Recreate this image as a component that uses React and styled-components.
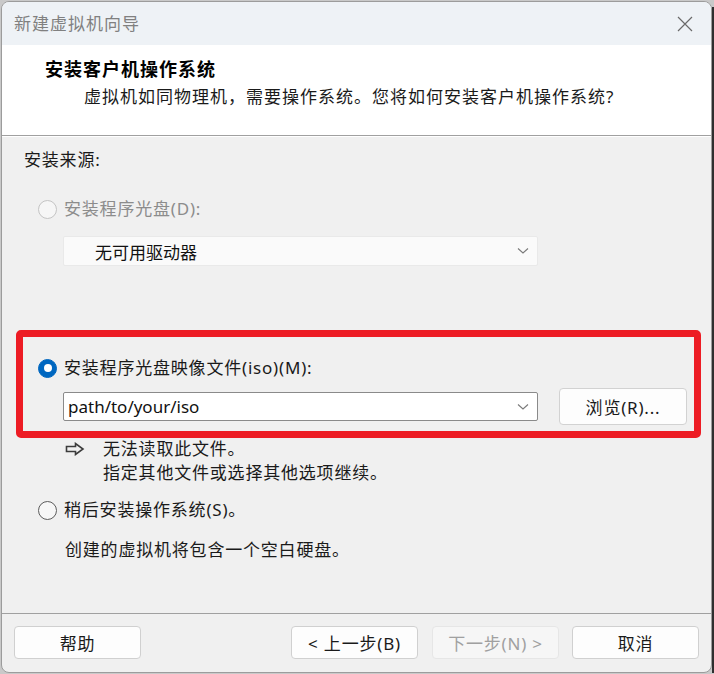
import styled, { createGlobalStyle } from "styled-components";

const GlobalStyle = createGlobalStyle`
  html, body {
    margin: 0;
    padding: 0;
    background: #c9c9c9;
  }
  * {
    box-sizing: border-box;
  }
`;

const FONT = `"Noto Sans", "Noto Sans CJK SC", sans-serif`;

const Chevron = () => (
  <svg width="12" height="8" viewBox="0 0 12 8">
    <path d="M1 1.5 L6 6 L11 1.5" fill="none" stroke="#7a7a7a" strokeWidth="1.1" />
  </svg>
);

const HollowArrow = () => (
  <svg width="20" height="14" viewBox="0 0 20 14">
    <path
      d="M1.5 4.5 H10.5 V1.5 L18 7 L10.5 12.5 V9.5 H1.5 Z"
      fill="none"
      stroke="#3c3c3c"
      strokeWidth="1.6"
      strokeLinejoin="miter"
    />
  </svg>
);

const CloseIcon = () => (
  <svg width="16" height="16" viewBox="0 0 16 16">
    <path d="M1 1 L15 15 M15 1 L1 15" stroke="#6a6a6a" strokeWidth="1.2" />
  </svg>
);

const App = () => {
  return (
    <>
      <GlobalStyle />
      <Page>
        <Window>
          <TitleBar>
            <TitleText>新建虚拟机向导</TitleText>
            <CloseButton>
              <CloseIcon />
            </CloseButton>
          </TitleBar>
          <Header>
            <HeaderTitle>安装客户机操作系统</HeaderTitle>
            <HeaderSub>虚拟机如同物理机，需要操作系统。您将如何安装客户机操作系统?</HeaderSub>
          </Header>
          <Body>
            <SectionLabel>安装来源:</SectionLabel>

            <RadioRow $top={29}>
              <Radio $disabled />
              <RadioLabel $disabled>安装程序光盘(D):</RadioLabel>
            </RadioRow>
            <FieldRow $top={17}>
              <Select $disabled>
                <SelectText $indent={31}>无可用驱动器</SelectText>
                <Chevron />
              </Select>
            </FieldRow>

            <RadioRow $top={92}>
              <Radio $checked />
              <RadioLabel>安装程序光盘映像文件(iso)(M):</RadioLabel>
            </RadioRow>
            <FieldRow $top={10}>
              <Select>
                <SelectText $indent={4}>path/to/your/iso</SelectText>
                <Chevron />
              </Select>
              <BrowseButton>浏览(R)...</BrowseButton>
            </FieldRow>
            <Warning>
              <ArrowBox>
                <HollowArrow />
              </ArrowBox>
              <WarningText>
                <span>无法读取此文件。</span>
                <span>指定其他文件或选择其他选项继续。</span>
              </WarningText>
            </Warning>

            <RadioRow $top={15}>
              <Radio />
              <RadioLabel>稍后安装操作系统(S)。</RadioLabel>
            </RadioRow>
            <Description>创建的虚拟机将包含一个空白硬盘。</Description>

            <Highlight />
          </Body>
          <Footer>
            <Button>帮助</Button>
            <Spacer />
            <Button>&lt; 上一步(B)</Button>
            <Button $disabled>下一步(N) &gt;</Button>
            <Button $gap={13}>取消</Button>
          </Footer>
        </Window>
        <Backdrop />
      </Page>
    </>
  );
};

export default App;

const Page = styled.div`
  display: flex;
  width: 714px;
  height: 674px;
  padding: 1px 0 1px 1px;
  font-family: ${FONT};
  font-size: 17px;
  letter-spacing: 0.8px;
`;

const Backdrop = styled.div`
  flex: 1;
  background: #2f2f2f;
  margin-top: 6px;
`;

const Window = styled.div`
  width: 711px;
  height: 672px;
  display: flex;
  flex-direction: column;
  border: 1px solid #9c9c9c;
  border-radius: 8px;
  overflow: hidden;
  background: #f0f0f0;
`;

const TitleBar = styled.div`
  height: 43px;
  flex-shrink: 0;
  display: flex;
  align-items: center;
  justify-content: space-between;
  padding: 0 18px 0 12px;
  background: #eef2f6;
`;

const TitleText = styled.div`
  font-size: 17px;
  letter-spacing: 1px;
  color: #808080;
  margin-top: -3px;
`;

const CloseButton = styled.div`
  display: flex;
  align-items: center;
  padding-top: 1px;
`;

const Header = styled.div`
  height: 91px;
  flex-shrink: 0;
  background: #ffffff;
  border-bottom: 1px solid #a0a0a0;
  padding: 14px 0 0 43px;
  display: flex;
  flex-direction: column;
  gap: 8px;
`;

const HeaderTitle = styled.div`
  font-size: 18px;
  letter-spacing: 1px;
  line-height: 20px;
  font-weight: 700;
  color: #000;
`;

const HeaderSub = styled.div`
  line-height: 20px;
  letter-spacing: 1px;
  color: #1a1a1a;
  padding-left: 39px;
`;

const Body = styled.div`
  position: relative;
  flex: 1;
  border-top: 1px solid #ffffff;
  border-bottom: 1px solid #a0a0a0;
  padding: 13px 0 0 22px;
  display: flex;
  flex-direction: column;
`;

const SectionLabel = styled.div`
  line-height: 20px;
  color: #1a1a1a;
`;

const RadioRow = styled.div`
  display: flex;
  align-items: center;
  gap: 7px;
  margin-top: ${(p) => p.$top}px;
  padding-left: 14px;
  height: 20px;
`;

const Radio = styled.span`
  width: 19px;
  height: 19px;
  border-radius: 50%;
  flex-shrink: 0;
  position: relative;
  background: ${(p) => (p.$checked ? "#0067c0" : p.$disabled ? "#f6f6f6" : "#f7f7f7")};
  border: 1px solid
    ${(p) => (p.$checked ? "#0067c0" : p.$disabled ? "#c4c4c4" : "#5c5c5c")};

  &::after {
    content: "";
    display: ${(p) => (p.$checked ? "block" : "none")};
    position: absolute;
    left: 50%;
    top: 50%;
    width: 8px;
    height: 8px;
    margin: -4px 0 0 -4px;
    border-radius: 50%;
    background: #ffffff;
  }
`;

const RadioLabel = styled.span`
  line-height: 20px;
  color: ${(p) => (p.$disabled ? "#8c8c8c" : "#1a1a1a")};
`;

const FieldRow = styled.div`
  display: flex;
  align-items: center;
  gap: 21px;
  margin-top: ${(p) => p.$top}px;
  padding-left: 39px;
`;

const Select = styled.div`
  width: 475px;
  height: ${(p) => (p.$disabled ? 30 : 29)}px;
  display: flex;
  align-items: center;
  justify-content: space-between;
  padding-right: 8px;
  border-radius: 2px;
  background: ${(p) => (p.$disabled ? "#fafafa" : "#ffffff")};
  border: 1px solid ${(p) => (p.$disabled ? "#e9e9e9" : "#8a8a8a")};
`;

const SelectText = styled.span`
  padding-left: ${(p) => p.$indent}px;
  letter-spacing: 0;
  color: #111;
`;

const BrowseButton = styled.div`
  width: 128px;
  height: 37px;
  display: flex;
  align-items: center;
  justify-content: center;
  color: #1a1a1a;
  background: #fdfdfd;
  border: 1px solid #d2d2d2;
  border-radius: 4px;
`;

const Warning = styled.div`
  display: flex;
  margin-top: 12px;
  padding-left: 41px;
  gap: 18px;
`;

const ArrowBox = styled.div`
  height: 24px;
  display: flex;
  align-items: center;
`;

const WarningText = styled.div`
  display: flex;
  flex-direction: column;
  line-height: 24px;
  color: #1a1a1a;
`;

const Description = styled.div`
  margin-top: 20px;
  padding-left: 41px;
  line-height: 20px;
  color: #1a1a1a;
`;

const Highlight = styled.div`
  position: absolute;
  left: 14px;
  top: 193px;
  width: 685px;
  height: 108px;
  border: 7px solid #ed1c24;
  border-radius: 5px;
  pointer-events: none;
`;

const Footer = styled.div`
  height: 58px;
  flex-shrink: 0;
  display: flex;
  align-items: flex-start;
  gap: 14px;
  padding: 12px 12px 0 12px;
`;

const Spacer = styled.div`
  flex: 1;
`;

const Button = styled.div`
  width: 127px;
  height: 33px;
  display: flex;
  align-items: center;
  justify-content: center;
  margin-left: ${(p) => (p.$gap ? p.$gap - 14 : 0)}px;
  color: ${(p) => (p.$disabled ? "#a0a0a0" : "#1a1a1a")};
  background: ${(p) => (p.$disabled ? "#f6f6f6" : "#fdfdfd")};
  border: 1px solid ${(p) => (p.$disabled ? "#e6e6e6" : "#d0d0d0")};
  border-radius: 4px;
`;
